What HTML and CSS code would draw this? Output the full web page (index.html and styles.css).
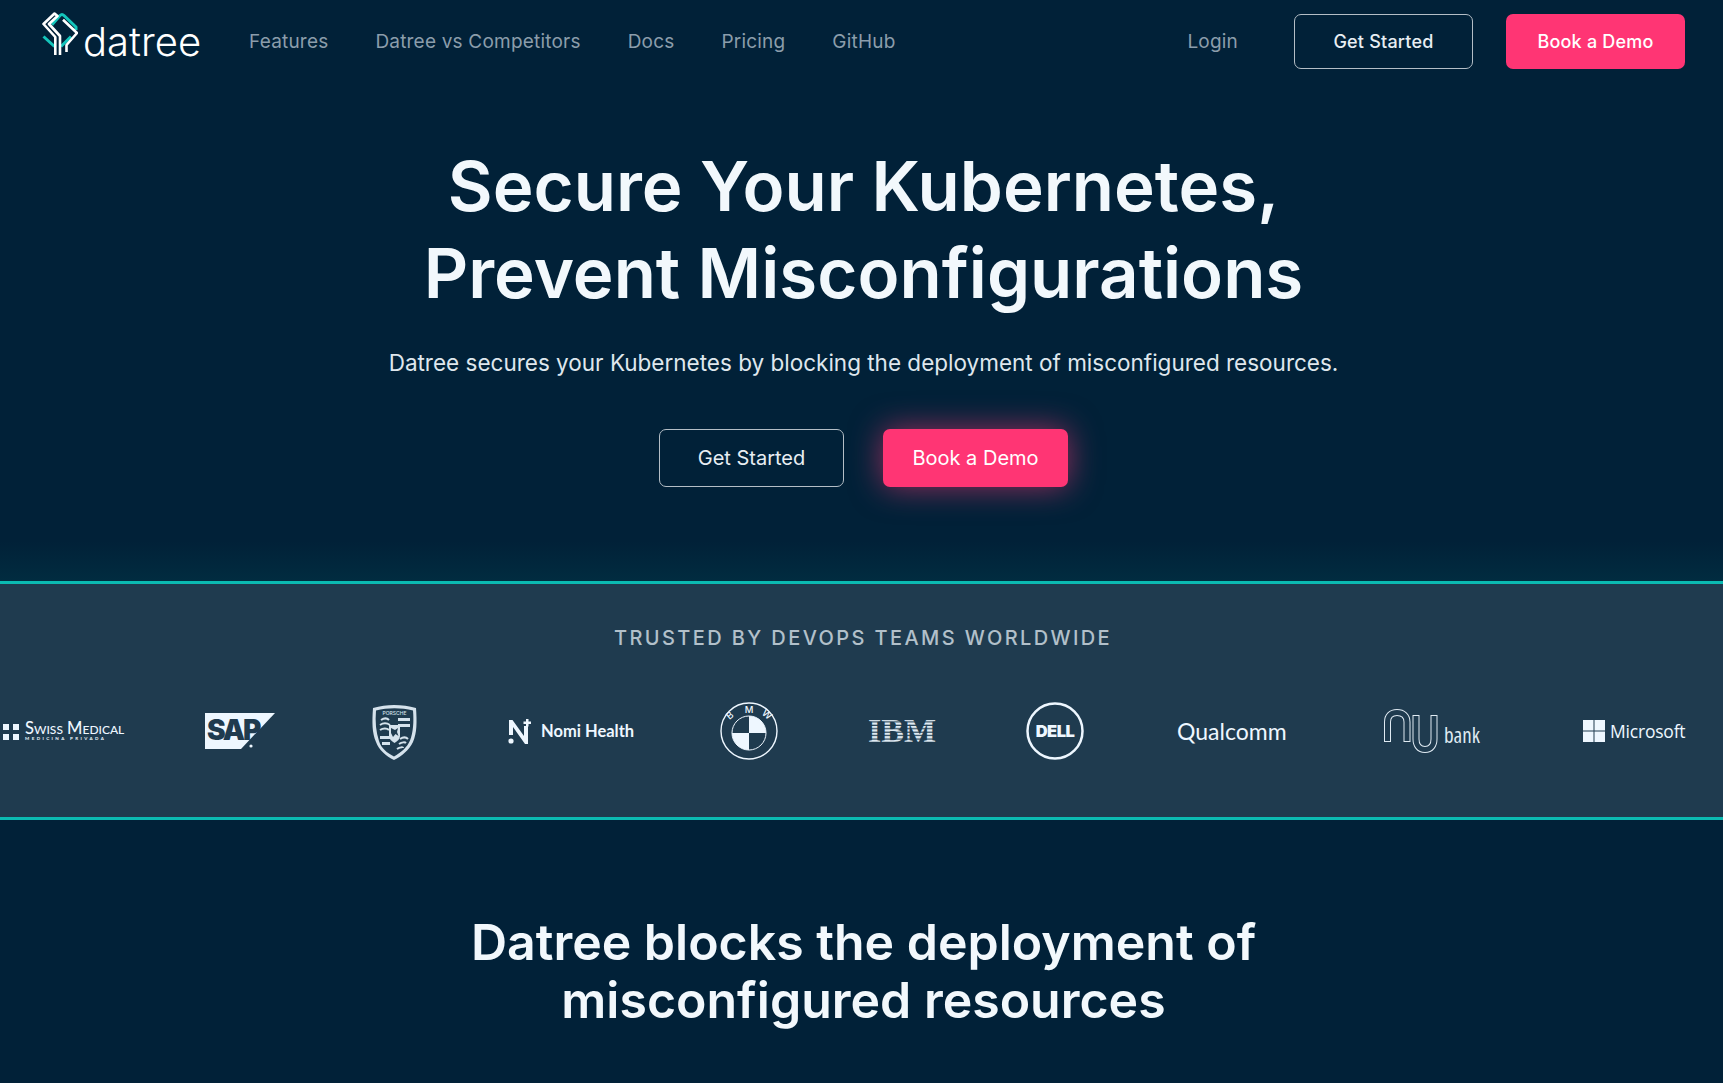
FILE: index.html
```html
<!DOCTYPE html>
<html lang="en">
<head>
<meta charset="utf-8">
<title>Datree</title>
<link rel="stylesheet" href="styles.css">
</head>
<body>
<header class="nav">
  <a class="brand">
    <svg class="brand-mark" viewBox="0 0 36 43" fill="none" stroke-width="2.6" stroke-linejoin="round">
      <path stroke="#14c5bb" stroke-width="3" d="M10 12.700L18 3.500Q20 1.500 22 3.500L34 15V18M1.500 24.500L12.500 34.500M19 34.500L29 24.500"/>
      <path stroke="#fff" d="M13.300 43V25L1.500 12 12.500 1.500 15.500 4 7 12 18 24V43M21 7.700L35 21 24.500 33V40"/>
    </svg>
    <span class="brand-name">datree</span>
  </a>
  <nav class="nav-links">
    <a>Features</a><a>Datree vs Competitors</a><a>Docs</a><a>Pricing</a><a>GitHub</a>
  </nav>
  <a class="login">Login</a>
  <a class="btn btn-outline nav-btn">Get Started</a>
  <a class="btn btn-pink nav-btn">Book a Demo</a>
</header>

<section class="hero">
  <h1>Secure Your Kubernetes,<br>Prevent Misconfigurations</h1>
  <p>Datree secures your Kubernetes by blocking the deployment of misconfigured resources.</p>
  <div class="hero-actions">
    <a class="btn btn-outline hero-btn">Get Started</a>
    <a class="btn btn-pink hero-btn glow">Book a Demo</a>
  </div>
</section>

<section class="trusted">
  <h2>TRUSTED BY DEVOPS TEAMS WORLDWIDE</h2>
  <div class="logos">
    <svg class="logo l-swiss" viewBox="0 0 122 20"><g fill="#eef7ff"><rect x="0" y="3" width="6" height="6"/><rect x="10" y="3" width="6" height="6"/><rect x="0" y="13" width="6" height="6"/><rect x="10" y="13" width="6" height="6"/><text x="22" y="13" class="t-swiss">Swiss Medical</text><text x="22" y="19" class="t-swiss2">MEDICINA PRIVADA</text></g></svg>
    <svg class="logo l-sap" viewBox="0 0 70 36"><path fill="#eef7ff" d="M0 0h70L36 36H0z"/><text x="2" y="27" class="t-sap">SAP</text><circle cx="46" cy="33" r="1.600" fill="#eef7ff"/></svg>
    <svg class="logo l-porsche" viewBox="0 0 45 57">
      <path fill="#d5e2ec" d="M22 1c8 0 15 1 22 3 1 14 1 25-3 34-4 8-11 14-19 18C14 52 7 46 4 38 0 29 0 18 1 4c7-2 14-3 21-3z"/>
      <path fill="#1f3b4f" d="M4 6.500c12-3 25-3 37 0 1 12 0 22-3 30-3 7-9 12-16 16C15 49 9 44 7 37 4 28 3 18 4 6.500z"/>
      <text x="22.500" y="10.500" class="t-porsche">PORSCHE</text>
      <path fill="#d5e2ec" d="M26 14h12v3H26zM26 20h12v3H26zM8 32h10v3H8zM10 38h8v3H10z"/>
      <path fill="none" stroke="#d5e2ec" stroke-width="2" d="M9 16c3-2 6-2 8 0M8 21c3-2 7-2 10 0M8 26c3-2 7-2 9 0M28 35c3-2 6-2 8 0M27 40c3-2 6-2 7-1M25 45c3-2 6-2 6-1"/>
      <path fill="#d5e2ec" d="M17 21h11v11c0 3-2.500 5-5.500 7-3-2-5.500-4-5.500-7z"/>
      <path fill="#1f3b4f" d="M19 24l4 2 3-2-1 4 1.500 4-3-2-2.500 3-2-4z"/>
    </svg>
    <div class="logo l-nomi">
      <svg class="nomi-mark" viewBox="0 0 24 25"><g fill="#eef7ff"><circle cx="3" cy="22" r="2.600"/><path d="M1 1h3.500L16 17V7h4v18h-3L5 8v8H1zM18 0h2.500v2.500H23V5h-2.500v2.500H18V5h-2.500V2.500H18z"/></g></svg>
      <span>Nomi Health</span>
    </div>
    <svg class="logo l-bmw" viewBox="0 0 58 58"><circle cx="29" cy="29" r="28" fill="none" stroke="#eef7ff" stroke-width="1.400"/><circle cx="29" cy="31" r="17" fill="none" stroke="#eef7ff" stroke-width="1"/><path fill="#eef7ff" d="M29 14a17 17 0 0 1 17 17H29zM29 48a17 17 0 0 1-17-17h17z"/><text class="t-bmw" transform="translate(12 16) rotate(-40)">B</text><text class="t-bmw" x="29" y="11">M</text><text class="t-bmw" transform="translate(45 15) rotate(40)">W</text></svg>
    <svg class="logo l-ibm" viewBox="0 0 64 24"><defs><pattern id="ibm-stripes" width="64" height="3.430" patternUnits="userSpaceOnUse"><rect width="64" height="2.300" fill="#dfeaf2"/></pattern></defs><text x="32" y="23" class="t-ibm" fill="url(#ibm-stripes)">IBM</text></svg>
    <svg class="logo l-dell" viewBox="0 0 58 58"><circle cx="29" cy="29" r="27.500" fill="none" stroke="#eef7ff" stroke-width="2.500"/><text x="29" y="35" class="t-dell">DELL</text></svg>
    <div class="logo l-qual">Qualcomm</div>
    <div class="logo l-nu">
      <svg class="nu-mark" viewBox="0 0 54 45" fill="none">
        <path stroke="#dfeaf2" stroke-width="7" d="M3.500 33V13C3.500 7 7 3.500 13 3.500S23 7 23 13V33M32 6V30C32 36 35 40.500 41 40.500S50 36 50 30V6"/>
        <path stroke="#1f3b4f" stroke-width="5" d="M3.500 32V13C3.500 7 7 3.500 13 3.500S23 7 23 13V32M32 7V30C32 36 35 40.500 41 40.500S50 36 50 30V7"/>
      </svg>
      <span>bank</span>
    </div>
    <div class="logo l-ms">
      <svg class="ms-mark" viewBox="0 0 22 22"><path fill="#eef7ff" d="M0 0h10.500v10.500H0zM11.500 0H22v10.500H11.500zM0 11.500h10.500V22H0zM11.500 11.500H22V22H11.500z"/></svg>
      <span>Microsoft</span>
    </div>
  </div>
</section>

<section class="blocks">
  <h2>Datree blocks the deployment of<br>misconfigured resources</h2>
</section>
</body>
</html>
```
FILE: styles.css
```css
* { box-sizing: border-box; }
html, body { margin: 0; height: 100%; }
body {
  width: 1723px;
  height: 1083px;
  overflow: hidden;
  background: #012138;
  color: #fff;
  font-family: "Inter", "Open Sans", sans-serif;
}
a { color: inherit; text-decoration: none; }

.nav {
  display: flex;
  align-items: center;
  height: 83px;
  padding: 0 38px 0 42px;
}
.brand {
  display: flex;
  align-items: flex-end;
  width: 207px;
  height: 43px;
  margin-bottom: 16px;
}
.brand-mark { width: 36px; height: 43px; flex: none; }
.brand-name {
  margin: 0 0 -2px 5px;
  font-size: 40px;
  font-weight: 300;
  line-height: 30px;
  color: #fff;
}
.nav-links { display: flex; gap: 47px; font-size: 19px; letter-spacing: .2px; color: #8b9dab; }
.login { margin-left: auto; margin-right: 56px; font-size: 19px; letter-spacing: .2px; color: #8b9dab; }

.btn {
  display: flex;
  align-items: center;
  justify-content: center;
  border-radius: 7px;
}
.btn-outline { border: 1.500px solid #b4bec6; color: #e8eef3; }
.btn-pink { background: #ff3574; color: #fff; }
.nav-btn { width: 179px; height: 55px; font-size: 18px; font-weight: 500; letter-spacing: .2px; }
.nav-btn + .nav-btn { margin-left: 33px; }

.hero {
  display: flex;
  flex-direction: column;
  align-items: center;
  height: 498px;
  padding: 60px 0 0 4px;
  background: linear-gradient(#012138 0, #012138 92%, #012c40 100%);
}
.hero h1 {
  margin: 0;
  font-size: 69px;
  font-weight: 600;
  line-height: 87px;
  color: #f2f8fc;
  text-align: center;
}
.hero p {
  margin: 30px 0 0;
  font-size: 22.500px;
  line-height: 32px;
  color: #dfe7ed;
}
.hero-actions { display: flex; gap: 39px; margin-top: 50px; }
.hero-btn { width: 185px; height: 58px; font-size: 20px; }
.glow { box-shadow: 0 0 32px rgba(255, 53, 116, .6); }

.trusted {
  height: 239px;
  background: #1f3b4f;
  border-top: 3px solid #0bbab2;
  border-bottom: 3px solid #0bbab2;
  overflow: hidden;
}
.trusted h2 {
  margin: 41px 0 0;
  padding-left: 3px;
  font-size: 20px;
  font-weight: 500;
  line-height: 26px;
  letter-spacing: 2.400px;
  text-align: center;
  color: #b2c0ca;
}
.logos {
  display: flex;
  align-items: center;
  height: 60px;
  margin-top: 50px;
  padding-left: 3px;
}
.logo { flex: none; overflow: visible; color: #eef7ff; }
.l-swiss { width: 122px; height: 20px; }
.l-sap { width: 70px; height: 36px; margin-left: 80px; }
.l-porsche { width: 45px; height: 57px; margin: 2px 0 0 97px; }
.l-nomi {
  display: flex;
  align-items: center;
  gap: 9px;
  width: 127px;
  margin-left: 91px;
  font-family: "Lato", sans-serif;
  font-size: 16.500px;
  font-weight: 700;
}
.nomi-mark { width: 24px; height: 25px; }
.l-bmw { width: 58px; height: 58px; margin-left: 85px; }
.l-ibm { width: 64px; height: 24px; margin-left: 92px; }
.l-dell { width: 58px; height: 58px; margin-left: 92px; }
.l-qual { width: 111px; margin-left: 93px; font-family: "Lato", sans-serif; font-size: 23px; }
.l-nu { display: flex; align-items: flex-end; gap: 6px; width: 102px; margin-left: 96px; }
.nu-mark { width: 54px; height: 45px; }
.l-nu span {
  margin-bottom: 7px;
  font-family: "Open Sans", sans-serif;
  font-size: 21px;
  line-height: 24px;
  color: #dfeaf2;
  font-stretch: condensed;
}
.l-ms {
  display: flex;
  align-items: center;
  gap: 5px;
  width: 104px;
  margin-left: 97px;
  font-family: "Open Sans", sans-serif;
  font-size: 17.500px;
  letter-spacing: -.2px;
}
.ms-mark { width: 22px; height: 22px; flex: none; }

.t-swiss { font: 500 16.500px "Lato", sans-serif; font-variant: small-caps; }
.t-swiss2 { font: 700 4.500px "Lato", sans-serif; letter-spacing: 2.400px; }
.t-sap { font: 900 28px "Inter", sans-serif; fill: #1f3b4f; letter-spacing: -2px; }
.t-bmw { font: 500 9.500px "Inter", sans-serif; fill: #eef7ff; text-anchor: middle; }
.t-ibm { font: 700 34px "Liberation Serif", serif; text-anchor: middle; }
.t-dell { font: 900 16.500px "Inter", sans-serif; fill: #eef7ff; text-anchor: middle; letter-spacing: -.5px; }
.t-porsche { font: 500 5px "Inter", sans-serif; fill: #d5e2ec; text-anchor: middle; }

.blocks { padding: 93px 0 0 4px; }
.blocks h2 {
  margin: 0;
  font-size: 50px;
  font-weight: 600;
  line-height: 58px;
  text-align: center;
  color: #f2f8fc;
}
```
